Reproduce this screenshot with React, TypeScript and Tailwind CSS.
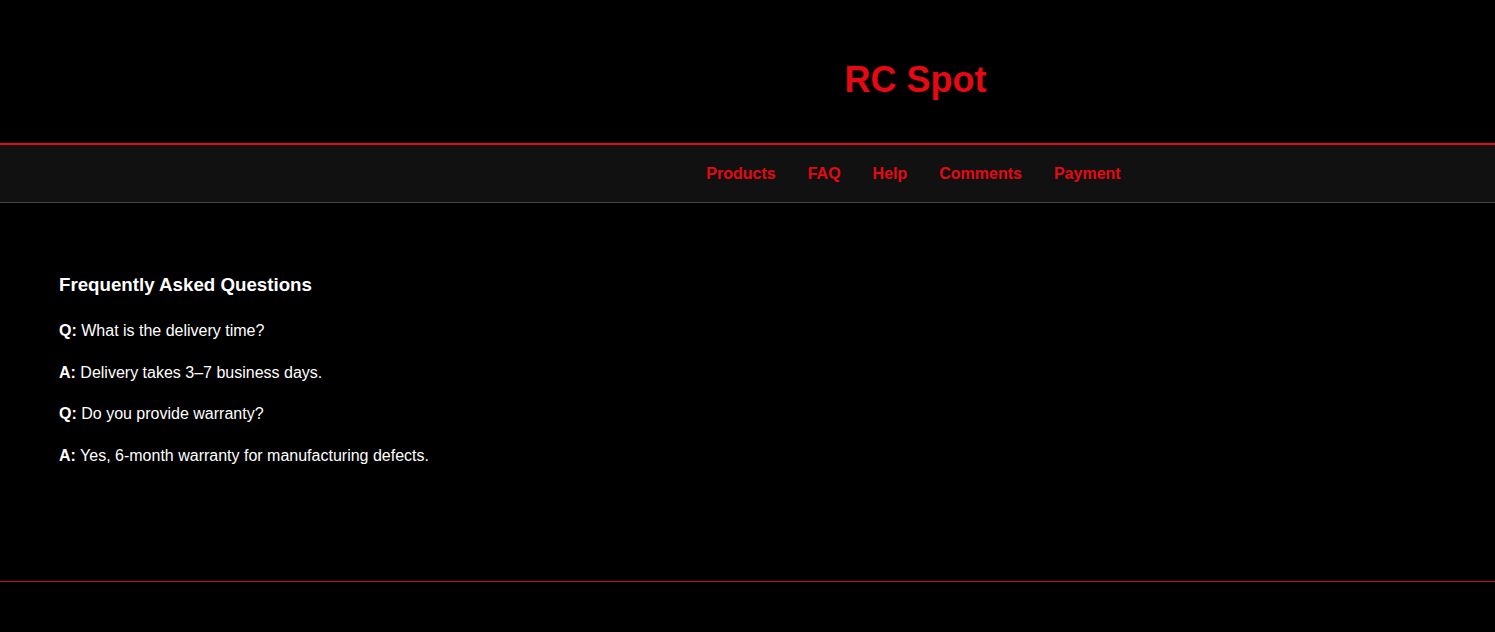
import React from "react";

export default function App() {
  const links = ["Products", "FAQ", "Help", "Comments", "Payment"];
  return (
    <div className="min-h-[632px] bg-black text-white" style={{ fontFamily: '"Liberation Sans", Arial, sans-serif' }}>
      <header className="h-[145px] border-b-2 border-[#e50914] flex items-center justify-center pl-[336px]">
        <h1 className="text-[36px] font-bold text-[#e50914] leading-none mt-[16px]">RC Spot</h1>
      </header>
      <nav className="h-[58px] bg-[#111111] border-b border-[#444444] flex items-center justify-center pl-[332px]">
        <ul className="flex gap-8 text-[16px] font-bold text-[#e50914] mt-[1px]">
          {links.map((l) => (
            <li key={l}>{l}</li>
          ))}
        </ul>
      </nav>
      <main className="h-[378px] pt-[71px] pl-[59px]">
        <h2 className="text-[18.72px] font-bold leading-[22px] mb-[22px]">Frequently Asked Questions</h2>
        <div className="text-[16px] leading-[25.6px] flex flex-col gap-[16px]">
          <p><b>Q:</b> What is the delivery time?</p>
          <p><b>A:</b> Delivery takes 3–7 business days.</p>
          <p><b>Q:</b> Do you provide warranty?</p>
          <p><b>A:</b> Yes, 6-month warranty for manufacturing defects.</p>
        </div>
      </main>
      <footer className="h-[51px] border-t border-[#c8101a]"></footer>
    </div>
  );
}
